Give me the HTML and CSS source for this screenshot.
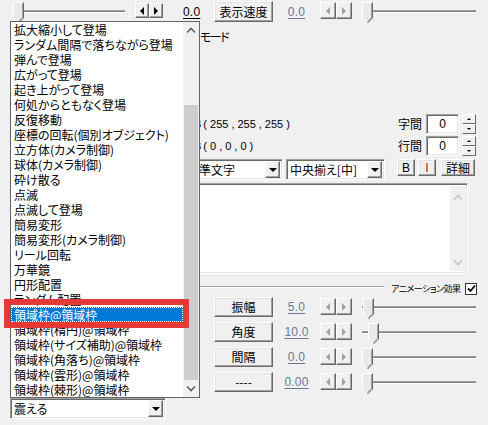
FILE: index.html
```html
<!DOCTYPE html>
<html lang="ja">
<head>
<meta charset="utf-8">
<title>AviUtl</title>
<link rel="stylesheet" href="styles.css">
</head>
<body>
<div class="win">

  <div class="row-top">
    <div class="lgroup">
      <div class="slider s-left">
        <svg class="thumb" width="11" height="22" viewBox="0 0 11 22"><path d="M0 0H11V16L5.5 21.5L0 16Z" fill="#e9e9e9"/><path d="M0.5 16V0.5H10.5" stroke="#fff" fill="none"/><path d="M0.5 16L5.5 21" stroke="#fff" fill="none"/><path d="M10.5 0.5V16L5.5 21" stroke="#696969" fill="none"/><path d="M9.5 1.5V15.5L5.5 19.5" stroke="#a0a0a0" fill="none"/></svg>
        <div class="track"></div>
      </div>
      <div class="arrows small">
        <span class="arr"><i class="tri-l"></i></span>
        <span class="arr"><i class="tri-r"></i></span>
      </div>
      <span class="val dark">0.0</span>
    </div>
    <div class="param">
      <span class="btn pbtn tall">表示速度</span>
      <span class="val">0.0</span>
      <div class="arrows">
        <span class="arr"><i class="tri-l off"></i></span>
        <span class="arr"><i class="tri-r off"></i></span>
      </div>
      <div class="slider">
        <svg class="thumb" width="11" height="22" viewBox="0 0 11 22"><path d="M0 0H11V16L5.5 21.5L0 16Z" fill="#e9e9e9"/><path d="M0.5 16V0.5H10.5" stroke="#fff" fill="none"/><path d="M0.5 16L5.5 21" stroke="#fff" fill="none"/><path d="M10.5 0.5V16L5.5 21" stroke="#696969" fill="none"/><path d="M9.5 1.5V15.5L5.5 19.5" stroke="#a0a0a0" fill="none"/></svg>
        <div class="track"></div>
      </div>
    </div>
  </div>

  <div class="mode">モード</div>

  <div class="font-rows">
    <div class="frow">
      <div class="rgb"><span class="rgb-l">B</span><span>(</span><span>255</span><span>,</span><span>255</span><span>,</span><span>255</span><span class="close">)</span></div>
      <span class="flabel">字間</span>
      <span class="field num">0</span>
      <div class="spin"><span class="sb"><i class="tri-u"></i></span><span class="sb"><i class="tri-d"></i></span></div>
    </div>
    <div class="frow">
      <div class="rgb"><span class="rgb-l">B</span><span>(</span><span>0</span><span>,</span><span>0</span><span>,</span><span>0</span><span class="close">)</span></div>
      <span class="flabel">行間</span>
      <span class="field num">0</span>
      <div class="spin"><span class="sb"><i class="tri-u"></i></span><span class="sb"><i class="tri-d"></i></span></div>
    </div>
  </div>

  <div class="dd-row">
    <div class="combo c-font"><span class="ctext">準文字</span><span class="cbtn"><i class="tri-d big"></i></span></div>
    <div class="combo c-align"><span class="ctext">中央揃え[中]</span><span class="cbtn"><i class="tri-d big"></i></span></div>
    <span class="btn sbtn b-b">B</span>
    <span class="btn sbtn b-i">I</span>
    <span class="btn sbtn b-d">詳細</span>
  </div>

  <div class="textarea">
    <div class="ta-body"></div>
    <div class="ta-scroll">
      <svg width="10" height="7" viewBox="0 0 10 7"><path d="M1 5.5L5 1.5L9 5.5" stroke="#c4c4c4" stroke-width="1.6" fill="none"/></svg>
      <svg width="10" height="7" viewBox="0 0 10 7"><path d="M1 1.5L5 5.5L9 1.5" stroke="#c4c4c4" stroke-width="1.6" fill="none"/></svg>
    </div>
  </div>

  <div class="group">
    <span class="gline"></span>
    <span class="glabel">アニメーション効果</span>
    <span class="check"><svg width="9" height="9" viewBox="0 0 9 9"><path d="M1 4.5L3.5 7L8 1.5" stroke="#000" stroke-width="1.8" fill="none"/></svg></span>
  </div>

  <div class="params">
    <div class="param">
      <span class="btn pbtn">振幅</span>
      <span class="val">5.0</span>
      <div class="arrows">
        <span class="arr"><i class="tri-l off"></i></span>
        <span class="arr"><i class="tri-r off"></i></span>
      </div>
      <div class="slider">
        <div class="track pre" style="width:1px"></div>
        <svg class="thumb" width="11" height="22" viewBox="0 0 11 22"><path d="M0 0H11V16L5.5 21.5L0 16Z" fill="#e9e9e9"/><path d="M0.5 16V0.5H10.5" stroke="#fff" fill="none"/><path d="M0.5 16L5.5 21" stroke="#fff" fill="none"/><path d="M10.5 0.5V16L5.5 21" stroke="#696969" fill="none"/><path d="M9.5 1.5V15.5L5.5 19.5" stroke="#a0a0a0" fill="none"/></svg>
        <div class="track"></div>
      </div>
    </div>
    <div class="param">
      <span class="btn pbtn">角度</span>
      <span class="val">10.0</span>
      <div class="arrows">
        <span class="arr"><i class="tri-l off"></i></span>
        <span class="arr"><i class="tri-r off"></i></span>
      </div>
      <div class="slider">
        <div class="track pre" style="width:6px"></div>
        <svg class="thumb" width="11" height="22" viewBox="0 0 11 22"><path d="M0 0H11V16L5.5 21.5L0 16Z" fill="#e9e9e9"/><path d="M0.5 16V0.5H10.5" stroke="#fff" fill="none"/><path d="M0.5 16L5.5 21" stroke="#fff" fill="none"/><path d="M10.5 0.5V16L5.5 21" stroke="#696969" fill="none"/><path d="M9.5 1.5V15.5L5.5 19.5" stroke="#a0a0a0" fill="none"/></svg>
        <div class="track"></div>
      </div>
    </div>
    <div class="param">
      <span class="btn pbtn">間隔</span>
      <span class="val">0.0</span>
      <div class="arrows">
        <span class="arr"><i class="tri-l off"></i></span>
        <span class="arr"><i class="tri-r off"></i></span>
      </div>
      <div class="slider">
        <svg class="thumb" width="11" height="22" viewBox="0 0 11 22"><path d="M0 0H11V16L5.5 21.5L0 16Z" fill="#e9e9e9"/><path d="M0.5 16V0.5H10.5" stroke="#fff" fill="none"/><path d="M0.5 16L5.5 21" stroke="#fff" fill="none"/><path d="M10.5 0.5V16L5.5 21" stroke="#696969" fill="none"/><path d="M9.5 1.5V15.5L5.5 19.5" stroke="#a0a0a0" fill="none"/></svg>
        <div class="track"></div>
      </div>
    </div>
    <div class="param">
      <span class="btn pbtn">----</span>
      <span class="val">0.00</span>
      <div class="arrows">
        <span class="arr"><i class="tri-l off"></i></span>
        <span class="arr"><i class="tri-r off"></i></span>
      </div>
      <div class="slider">
        <svg class="thumb" width="11" height="22" viewBox="0 0 11 22"><path d="M0 0H11V16L5.5 21.5L0 16Z" fill="#e9e9e9"/><path d="M0.5 16V0.5H10.5" stroke="#fff" fill="none"/><path d="M0.5 16L5.5 21" stroke="#fff" fill="none"/><path d="M10.5 0.5V16L5.5 21" stroke="#696969" fill="none"/><path d="M9.5 1.5V15.5L5.5 19.5" stroke="#a0a0a0" fill="none"/></svg>
        <div class="track"></div>
      </div>
    </div>
  </div>

  <div class="combo c-anim"><span class="ctext">震える</span><span class="cbtn"><i class="tri-d big"></i></span></div>

  <div class="droplist">
    <ul class="items">
      <li>拡大縮小して登場</li>
      <li>ランダム間隔で落ちながら登場</li>
      <li>弾んで登場</li>
      <li>広がって登場</li>
      <li>起き上がって登場</li>
      <li>何処からともなく登場</li>
      <li>反復移動</li>
      <li>座標の回転(個別オブジェクト)</li>
      <li>立方体(カメラ制御)</li>
      <li>球体(カメラ制御)</li>
      <li>砕け散る</li>
      <li>点滅</li>
      <li>点滅して登場</li>
      <li>簡易変形</li>
      <li>簡易変形(カメラ制御)</li>
      <li>リール回転</li>
      <li>万華鏡</li>
      <li>円形配置</li>
      <li>ランダム配置</li>
      <li class="sel">領域枠@領域枠</li>
      <li>領域枠(楕円)@領域枠</li>
      <li>領域枠(サイズ補助)@領域枠</li>
      <li>領域枠(角落ち)@領域枠</li>
      <li>領域枠(雲形)@領域枠</li>
      <li>領域枠(棘形)@領域枠</li>
    </ul>
    <div class="vscroll">
      <span class="sarrow"><svg width="10" height="7" viewBox="0 0 10 7"><path d="M1 5.5L5 1.5L9 5.5" stroke="#606060" stroke-width="1.6" fill="none"/></svg></span>
      <span class="strack"></span>
      <span class="sthumb"></span>
      <span class="sarrow"><svg width="10" height="7" viewBox="0 0 10 7"><path d="M1 1.5L5 5.5L9 1.5" stroke="#606060" stroke-width="1.6" fill="none"/></svg></span>
    </div>
  </div>

  <div class="redmark"></div>
</div>
</body>
</html>
```

FILE: styles.css
```css
* { box-sizing: border-box; }
html, body { margin: 0; padding: 0; }
body { background: #f0f0f0; }

.win {
  position: relative;
  width: 488px;
  height: 425px;
  overflow: hidden;
  background: #f0f0f0;
  font-family: "Noto Sans CJK JP", "Noto Sans", sans-serif;
  font-size: 12px;
  line-height: 12px;
  color: #000;
  font-feature-settings: "palt";
}

/* ---------- generic controls ---------- */
.btn {
  display: flex;
  align-items: center;
  justify-content: center;
  background: #f0f0f0;
  border: 1px solid;
  border-color: #fff #696969 #696969 #fff;
  box-shadow: inset -1px -1px #a0a0a0, inset 1px 1px #e3e3e3;
  font-size: 12px;
}

.field {
  background: #fff;
  border: 1px solid;
  border-color: #a0a0a0 #fff #fff #a0a0a0;
  box-shadow: inset 1px 1px #696969, inset -1px -1px #e3e3e3;
}

.tri-l, .tri-r, .tri-u, .tri-d { display: block; width: 0; height: 0; }
.tri-l { border-top: 4px solid transparent; border-bottom: 4px solid transparent; border-right: 4px solid #000; }
.tri-r { border-top: 4px solid transparent; border-bottom: 4px solid transparent; border-left: 4px solid #000; }
.tri-l.off { border-right-color: #a0a0a0; }
.tri-r.off { border-left-color: #a0a0a0; }
.tri-u { border-left: 2px solid transparent; border-right: 2px solid transparent; border-bottom: 2px solid #000; }
.tri-d { border-left: 2px solid transparent; border-right: 2px solid transparent; border-top: 2px solid #000; }
.tri-d.big { border-left-width: 4px; border-right-width: 4px; border-top-width: 4px; }

/* slider */
.slider { display: flex; align-items: flex-start; }
.thumb { display: block; flex: none; }
.track {
  flex: 1;
  height: 3px;
  margin-top: 8px;
  background: #808080;
  border-top: 1px solid #a0a0a0;
  border-bottom: 1px solid #fff;
}
.track.pre { flex: none; }

/* arrow pair */
.arrows { display: flex; }
.arr {
  width: 16px;
  height: 17px;
  display: flex;
  align-items: center;
  justify-content: center;
  background: #f0f0f0;
  border: 1px solid;
  border-color: #fff #696969 #696969 #fff;
  box-shadow: inset -1px -1px #a0a0a0;
}
.arrows.small .arr { width: 14px; height: 15px; }

/* value labels */
.val {
  color: #6a7896;
  text-decoration: underline;
  text-underline-offset: 2px;
  font-size: 12px;
  font-family: "Liberation Sans", "Noto Sans", sans-serif;
  letter-spacing: 0.2px;
}
.val.dark { color: #000; }

/* ---------- top row ---------- */
.row-top { display: flex; height: 25px; }
.lgroup {
  width: 214px;
  display: flex;
  align-items: flex-start;
  padding-left: 13px;
  padding-top: 2px;
}
.s-left { width: 112px; }
.lgroup .arrows { margin-left: 10px; margin-top: 1px; }
.lgroup .val { margin-left: 20px; margin-top: 4px; }

.param { display: flex; align-items: flex-start; height: 20px; }
.row-top .param { padding-top: 2px; }
.pbtn { width: 59px; height: 20px; }
.pbtn.tall { height: 21px; margin-top: -1px; }
.param .val { width: 47px; text-align: center; margin-top: 4px; }
.param .arrows { margin-top: 1px; }
.param .slider { width: 114px; margin-left: 10px; margin-top: 1px; }
.row-top .param .arrows, .row-top .param .slider { margin-top: 0; }

/* ---------- mode ---------- */
.mode {
  margin-top: 6px;
  padding-left: 200px;
  height: 12px;
  white-space: nowrap;
  letter-spacing: -1.5px;
}

/* ---------- font rows ---------- */
.font-rows { margin-top: 71px; display: flex; flex-direction: column; gap: 2px; }
.frow { display: flex; align-items: center; height: 20px; }
.rgb { display: flex; width: 398px; padding-left: 194px; font-family: "Liberation Sans", "Noto Sans", sans-serif; font-size: 11px; }
.rgb span { margin-right: 3px; }
.rgb .rgb-l { margin-right: 2px; }
.rgb .close { margin-left: 0; }
.flabel { width: 28px; }
.field.num { width: 33px; height: 20px; display: flex; align-items: center; justify-content: center; font-family: "Liberation Sans", sans-serif; }
.spin { margin-left: 3px; display: flex; flex-direction: column; }
.sb {
  width: 14px;
  height: 10px;
  display: flex;
  align-items: center;
  justify-content: center;
  background: #f0f0f0;
  border: 1px solid;
  border-color: #fff #696969 #696969 #fff;
}

/* ---------- dropdown row ---------- */
.dd-row { margin-top: 3px; display: flex; align-items: flex-start; height: 21px; }
.combo {
  display: flex;
  align-items: center;
  height: 21px;
  background: #fff;
  border: 1px solid;
  border-color: #a0a0a0 #fff #fff #a0a0a0;
  box-shadow: inset 1px 1px #696969, inset -1px -1px #e3e3e3;
  padding: 2px 2px 2px 3px;
}
.ctext { flex: 1; white-space: nowrap; }
.cbtn {
  width: 15px;
  height: 17px;
  display: flex;
  align-items: center;
  justify-content: center;
  background: #f0f0f0;
  border: 1px solid;
  border-color: #fff #696969 #696969 #fff;
  box-shadow: inset -1px -1px #a0a0a0;
}
.c-font { margin-left: 184px; width: 99px; padding-left: 14px; }
.c-align { margin-left: 3px; width: 99px; }
.sbtn { height: 17px; }
.b-b { margin-left: 12px; width: 18px; font-family: "Liberation Sans", sans-serif; }
.b-i { margin-left: 3px; width: 18px; color: #8b1a1a; font-family: "Liberation Sans", sans-serif; }
.b-d { margin-left: 5px; width: 34px; }

/* ---------- textarea ---------- */
.textarea {
  margin-top: 3px;
  margin-left: 184px;
  width: 284px;
  height: 91px;
  display: flex;
  background: #fff;
  border: 1px solid;
  border-color: #a0a0a0 #fff #fff #a0a0a0;
  box-shadow: inset 1px 1px #696969, inset -1px -1px #e3e3e3;
  padding: 2px 1px 2px 2px;
}
.ta-body { flex: 1; }
.ta-scroll {
  width: 16px;
  background: #f0f0f0;
  display: flex;
  flex-direction: column;
  justify-content: space-between;
  align-items: center;
  padding: 8px 0 5px;
}
.ta-scroll svg { display: block; }

/* ---------- group ---------- */
.group { margin-top: 9px; height: 11px; display: flex; align-items: center; }
.gline {
  flex: none;
  margin-left: 184px;
  width: 200px;
  height: 2px;
  border-top: 1px solid #a0a0a0;
  border-bottom: 1px solid #fff;
  margin-top: -4px;
}
.glabel { flex: none; width: 72px; margin-left: 7px; font-size: 9px; line-height: 10px; letter-spacing: -0.5px; white-space: nowrap; }
.check {
  flex: none;
  margin-left: 2px;
  width: 12px;
  height: 12px;
  background: #fff;
  border: 1.5px solid #333;
  display: flex;
  align-items: center;
  justify-content: center;
}
.check svg { display: block; }

/* ---------- params ---------- */
.params { margin-top: 3px; display: flex; flex-direction: column; gap: 5px; padding-left: 214px; }

/* ---------- bottom combo ---------- */
.c-anim { margin-top: 6px; margin-left: 10px; width: 156px; }

/* ---------- dropdown list (overlay) ---------- */
.droplist {
  position: absolute;
  left: 10px;
  top: 21px;
  width: 190px;
  height: 377px;
  background: #fff;
  border: 1px solid #646464;
  display: flex;
}
.items {
  list-style: none;
  margin: 0;
  padding: 0;
  width: 172px;
}
.items li {
  height: 15px;
  line-height: 15px;
  padding-left: 3px;
  white-space: nowrap;
  overflow: hidden;
}
.items li.sel {
  background: #0078d7;
  color: #fff;
  outline: 1px dotted #fff;
  outline-offset: -1px;
}
.vscroll {
  width: 16px;
  display: flex;
  flex-direction: column;
  background: #f0f0f0;
}
.sarrow { height: 17px; display: flex; align-items: center; justify-content: center; flex: none; }
.strack { height: 66px; flex: none; }
.sthumb { flex: 1; background: #cdcdcd; margin: 0 1px; }

/* ---------- red annotation ---------- */
.redmark {
  position: absolute;
  left: 4px;
  top: 299px;
  width: 185px;
  height: 29px;
  border: 6px solid #e53935;
}
```
